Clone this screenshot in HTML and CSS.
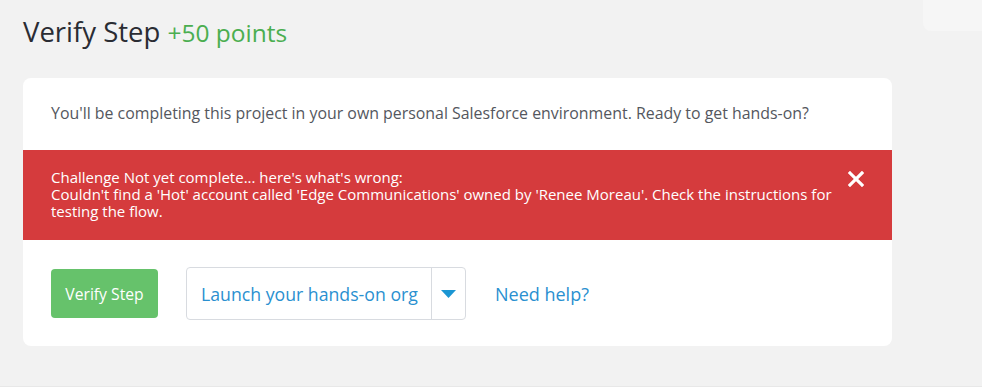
FILE: index.html
```html
<!DOCTYPE html>
<html>
<head>
<meta charset="utf-8">
<link rel="stylesheet" href="styles.css">
</head>
<body>
<div class="corner-card"></div>
<main class="page">
  <h1 class="title">Verify Step <span class="points">+50 points</span></h1>
  <section class="card">
    <p class="intro">You'll be completing this project in your own personal Salesforce environment. Ready to get hands-on?</p>
    <div class="alert">
      <div class="alert-text">
        <div>Challenge Not yet complete... here's what's wrong:</div>
        <div>Couldn't find a 'Hot' account called 'Edge Communications' owned by 'Renee Moreau'. Check the instructions for testing the flow.</div>
      </div>
      <svg class="close" width="16" height="16" viewBox="0 0 16 16"><path d="M2 2 L14 14 M14 2 L2 14" stroke="#fff" stroke-width="3.2" stroke-linecap="square"/></svg>
    </div>
    <div class="actions">
      <button class="verify">Verify Step</button>
      <div class="launch">
        <span class="launch-label">Launch your hands-on org</span>
        <span class="launch-toggle"><svg width="15" height="8" viewBox="0 0 15 8"><path d="M0 0 H15 L7.5 8 Z" fill="#1b96d3"/></svg></span>
      </div>
      <a class="help">Need help?</a>
    </div>
  </section>
</main>
</body>
</html>
```
FILE: styles.css
```css
html, body {
  margin: 0;
  padding: 0;
}
body {
  background: #f2f2f2;
  font-family: "Open Sans", "Liberation Sans", sans-serif;
  width: 982px;
  height: 387px;
  overflow: hidden;
  position: relative;
  border-bottom: 1px solid #e8e8e8;
  box-sizing: border-box;
}
.corner-card {
  position: absolute;
  top: 0;
  right: 0;
  width: 59px;
  height: 31px;
  background: #f6f6f6;
  border-bottom-left-radius: 8px;
}
.page {
  padding: 13px 0 0 23px;
  width: 869px;
}
.title {
  margin: 0;
  font-size: 27.5px;
  font-weight: 400;
  color: #2a2c33;
  line-height: 38px;
  letter-spacing: 0;
}
.points {
  color: #4bae50;
  font-size: 24.5px;
}
.card {
  margin-top: 26px;
  background: #fff;
  border-radius: 8px;
  overflow: hidden;
  padding-bottom: 26px;
}
.intro {
  margin: 0;
  padding: 25px 28px 0 28px;
  height: 47px;
  font-size: 15.9px;
  line-height: 20px;
  color: #54575e;
}
.alert {
  background: #d53b3d;
  color: #fff;
  height: 90px;
  display: flex;
  justify-content: space-between;
  padding: 19px 28px 0 28px;
  box-sizing: border-box;
}
.alert-text {
  font-size: 15px;
  line-height: 17px;
  width: 800px;
}
.close {
  margin-top: 2px;
  margin-right: 0px;
}
.actions {
  display: flex;
  align-items: center;
  padding: 27px 28px 0 28px;
  height: 53px;
}
.verify {
  background: #66c26b;
  color: #fff;
  border: 0;
  border-radius: 4px;
  width: 107px;
  height: 49px;
  font-family: inherit;
  font-size: 15.7px;
  padding: 0;
}
.launch {
  margin-left: 28px;
  display: flex;
  height: 53px;
  border: 1px solid #d8dbe0;
  border-radius: 4px;
  box-sizing: border-box;
  width: 280px;
}
.launch-label {
  flex: 1;
  display: flex;
  align-items: center;
  padding-left: 14px;
  font-size: 17.7px;
  color: #2a90d0;
  border-right: 1px solid #d8dbe0;
  white-space: nowrap;
}
.launch-toggle {
  width: 33px;
  display: flex;
  align-items: center;
  justify-content: center;
}
.help {
  margin-left: 29px;
  font-size: 18px;
  color: #2a90d0;
}
```
